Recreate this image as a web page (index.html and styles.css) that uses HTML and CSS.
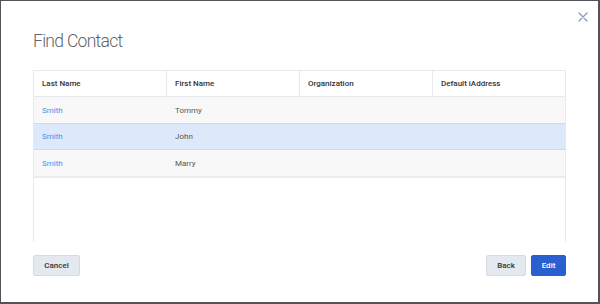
FILE: index.html
```html
<!DOCTYPE html>
<html>
<head>
<meta charset="utf-8">
<link rel="stylesheet" href="styles.css">
</head>
<body>
<div class="dialog">
  <button class="close" aria-label="Close">
    <svg width="10" height="10" viewBox="0 0 10 10"><path d="M1 1 L9 9 M9 1 L1 9" stroke="#8a9bb1" stroke-width="1.3" fill="none" stroke-linecap="round"/></svg>
  </button>
  <h1 class="title">Find Contact</h1>
  <div class="table">
    <div class="row head">
      <div class="cell">Last Name</div>
      <div class="cell">First Name</div>
      <div class="cell">Organization</div>
      <div class="cell">Default iAddress</div>
    </div>
    <div class="row">
      <div class="cell link">Smith</div>
      <div class="cell">Tommy</div>
      <div class="cell"></div>
      <div class="cell"></div>
    </div>
    <div class="row selected">
      <div class="cell link">Smith</div>
      <div class="cell">John</div>
      <div class="cell"></div>
      <div class="cell"></div>
    </div>
    <div class="row last">
      <div class="cell link">Smith</div>
      <div class="cell">Marry</div>
      <div class="cell"></div>
      <div class="cell"></div>
    </div>
  </div>
  <div class="footer">
    <button class="btn cancel">Cancel</button>
    <div class="actions">
      <button class="btn back">Back</button>
      <button class="btn primary">Edit</button>
    </div>
  </div>
</div>
</body>
</html>
```
FILE: styles.css
```css
* { box-sizing: border-box; }
html, body { margin: 0; padding: 0; background: #fff; }
body { font-family: Roboto, "Liberation Sans", sans-serif; }
.dialog {
  position: relative;
  width: 600px;
  height: 304px;
  background: #fff;
  border-style: solid;
  border-color: #50545a;
  border-width: 1px 2px 2px 1px;
  padding: 29px 32px 0 32px;
  display: flex;
  flex-direction: column;
}
.close {
  position: absolute;
  top: 10px;
  right: 9px;
  width: 12px;
  height: 12px;
  padding: 0;
  border: 0;
  background: none;
  display: flex;
  align-items: center;
  justify-content: center;
}
.title {
  margin: 0 0 18px 0;
  font-size: 17.5px;
  line-height: 22px;
  font-weight: 300;
  letter-spacing: -0.7px;
  color: #5f6368;
}
.table {
  height: 172px;
  border: 1px solid #e6e9ee;
  border-bottom: 0;
  display: flex;
  flex-direction: column;
}
.row {
  display: grid;
  grid-template-columns: 133px 133px 133px 1fr;
  height: 27px;
  background: #f8f8f8;
  border-bottom: 1px solid #e9e9e9;
  font-size: 8px;
  color: #555;
}
.row.head {
  height: 26px;
  background: #fff;
  border-bottom: 1px solid #e6e9ee;
  font-weight: 500;
  color: #333;
}
.row.head .cell { border-right: 1px solid #e6e9ee; }
.row.head .cell:last-child { border-right: 0; }
.row.selected {
  background: #dde9fb;
  border-bottom: 1px solid #c9daf3;
  margin-top: -1px;
  border-top: 1px solid #c9daf3;
  height: 27px;
}
.row.last { border-bottom: 2px solid #ececec; height: 28px; }
.cell {
  display: flex;
  align-items: center;
  padding-left: 8px;
}
.link { color: #4b8ef0; }
.footer {
  margin-top: 13px;
  display: flex;
  justify-content: space-between;
}
.actions { display: flex; gap: 5px; }
.btn {
  height: 21px;
  font-family: Roboto, "Liberation Sans", sans-serif;
  font-size: 8px;
  font-weight: 500;
  color: #333;
  background: #e4e8ef;
  border: 1px solid #d6dbe3;
  border-radius: 2px;
  padding: 0;
}
.cancel { width: 47px; }
.back { width: 40px; }
.primary {
  width: 35px;
  background: #2a5fcf;
  border-color: #2a5fcf;
  color: #fff;
}
```
